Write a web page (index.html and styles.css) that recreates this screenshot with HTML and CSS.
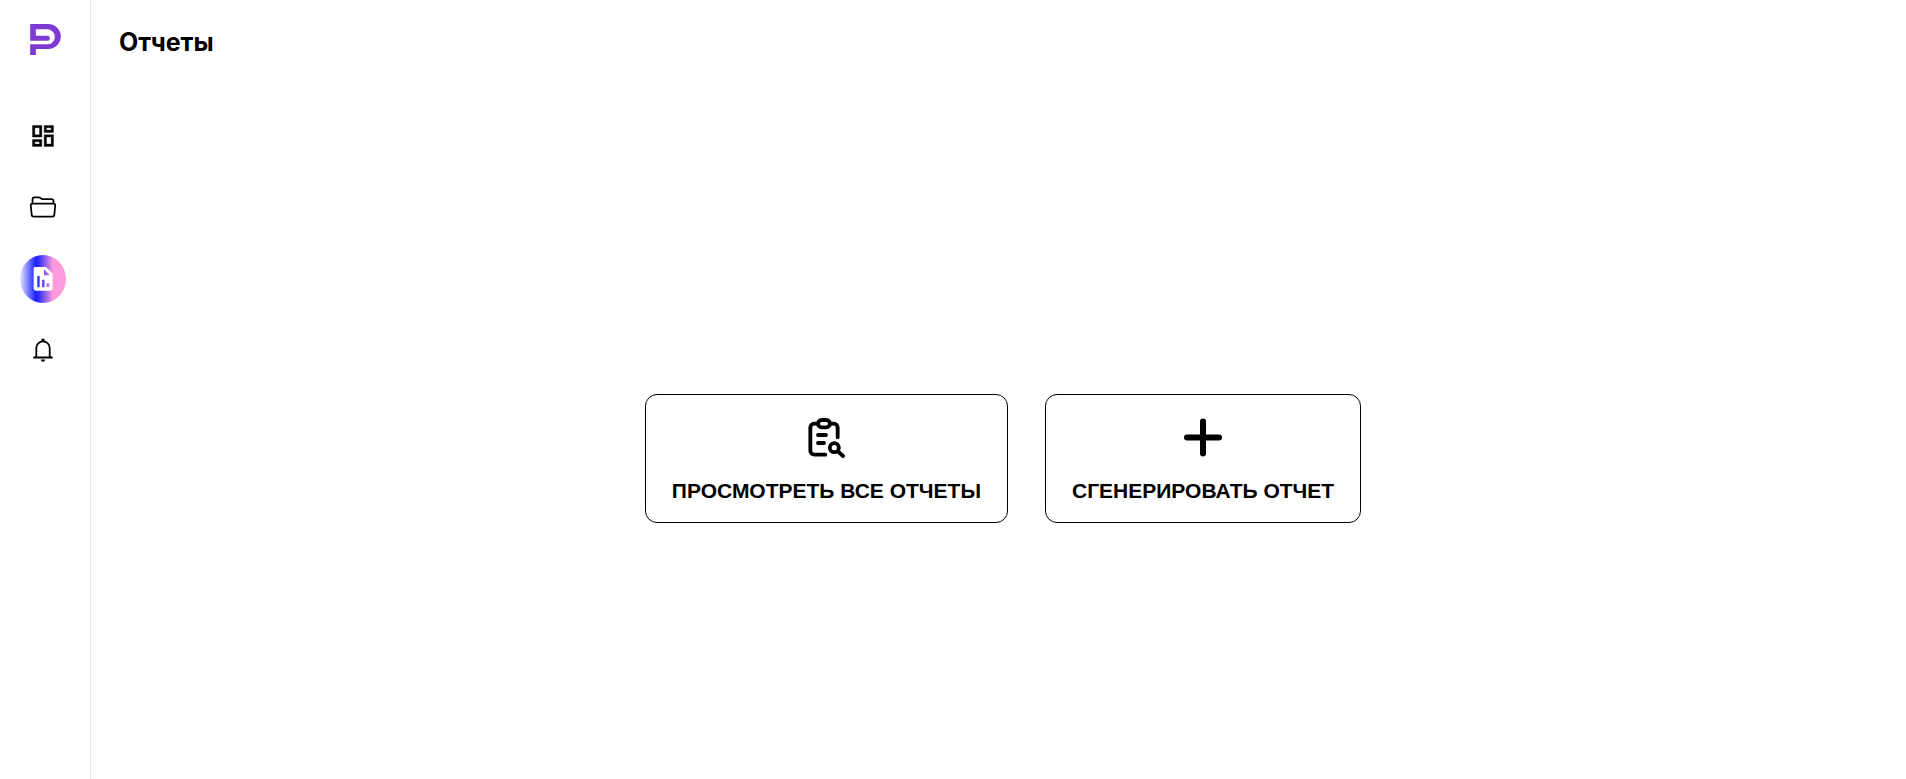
FILE: index.html
```html
<!DOCTYPE html>
<html lang="ru">
<head>
<meta charset="utf-8">
<title>Отчеты</title>
<meta name="viewport" content="width=device-width, initial-scale=1">
<link rel="stylesheet" href="styles.css">
</head>
<body>
<div class="app">
  <aside class="sidebar">
    <a class="logo" href="#" aria-label="Главная">
      <svg width="31" height="31" viewBox="91 72 92 93" fill="#7e3bd4" aria-hidden="true">
        <path d="M91 72H145.500A37.500 37.500 0 0 1 145.500 147H108V165H91V133H142.500A22.500 22.500 0 0 0 142.500 88H108V107H142.500A7.500 7.500 0 0 1 142.500 122H91Z"/>
      </svg>
    </a>
    <nav class="nav">
      <a class="nav-link" href="#" aria-label="Панель">
        <svg width="28" height="28" viewBox="0 -.8 24 24" stroke="#000" stroke-width=".3" aria-hidden="true">
          <path d="M19 5v2h-4V5h4M9 5v6H5V5h4m10 8v6h-4v-6h4M9 17v2H5v-2h4M21 3h-8v6h8V3zM11 3H3v10h8V3zm10 8h-8v10h8V11zm-10 4H3v6h8v-6z"/>
        </svg>
      </a>
      <a class="nav-link" href="#" aria-label="Файлы">
        <svg width="28" height="28" viewBox="0 0 512 512" fill="none" stroke="#000" stroke-width="32" stroke-linecap="round" stroke-linejoin="round" aria-hidden="true">
          <path d="M64 192v-72a40 40 0 0 1 40-40h75.890a40 40 0 0 1 22.190 6.720l27.840 18.560a40 40 0 0 0 22.190 6.720H408a40 40 0 0 1 40 40v40"/>
          <path d="M479.900 226.550L463.680 392a40 40 0 0 1-39.930 40H88.250a40 40 0 0 1-39.930-40L32.100 226.550A32 32 0 0 1 64 192h384.100a32 32 0 0 1 31.800 34.550z"/>
        </svg>
      </a>
      <a class="nav-link nav-link-active" href="#" aria-label="Отчеты" aria-current="page">
        <svg width="20" height="24" viewBox="-2 1 60 72" fill="#fff" fill-rule="evenodd" aria-hidden="true">
          <path d="M7 0H36L57 21V65a7 7 0 0 1-7 7H7a7 7 0 0 1-7-7V7a7 7 0 0 1 7-7ZM31 8V26H49ZM11 28V62H18V28ZM25 39V62H33V39ZM39 50V61H47V50Z"/>
        </svg>
      </a>
      <a class="nav-link" href="#" aria-label="Уведомления">
        <svg width="28" height="28" viewBox="0 0 28 28" fill="none" stroke="#000" stroke-width="1.800" aria-hidden="true">
          <path d="M4.300 20.500H23.700M7.300 20.500V11a6.700 6.700 0 0 1 13.400 0V20.500"/>
          <path d="M14 1.600a1.800 1.800 0 0 1 1.800 1.800V5H12.200V3.400A1.800 1.800 0 0 1 14 1.600ZM11.800 22.500H16.200a2.200 2.200 0 0 1-4.400 0Z" fill="#000" stroke="none"/>
        </svg>
      </a>
    </nav>
  </aside>
  <main class="main">
    <h1 class="title">Отчеты</h1>
    <div class="actions">
      <button class="card" type="button">
        <svg width="40" height="40" viewBox="35 40 120 120" fill="none" stroke="#000" stroke-width="11.500" stroke-linecap="round" stroke-linejoin="round" aria-hidden="true">
          <path d="M68 57H60A12 12 0 0 0 48 69V138A12 12 0 0 0 60 150H93M109 57H118A12 12 0 0 1 130 69V98M71 91H95M71 115H89M131 140L146 154"/>
          <rect x="71" y="46" width="36" height="22" rx="11"/>
          <circle cx="120" cy="129" r="13.500"/>
        </svg>
        <span>ПРОСМОТРЕТЬ ВСЕ ОТЧЕТЫ</span>
      </button>
      <button class="card" type="button">
        <svg width="40" height="40" viewBox="0 0 40 40" fill="none" stroke="#000" stroke-width="6" stroke-linecap="round" aria-hidden="true">
          <path d="M20 3.500V35.500M4 19.500H36"/>
        </svg>
        <span>СГЕНЕРИРОВАТЬ ОТЧЕТ</span>
      </button>
    </div>
  </main>
</div>
</body>
</html>
```
FILE: styles.css
```css
* {
  box-sizing: border-box;
}

body {
  margin: 0;
  background: #fff;
  color: #000;
  font-family: "Liberation Sans", Arial, sans-serif;
}

.app {
  display: flex;
  min-height: 100vh;
}

.sidebar {
  flex: none;
  padding: 24px 24px 24px 20px;
  border-right: 1px solid #e8e8ee;
}

.logo {
  display: block;
  padding-left: 10px;
}

.logo svg,
.nav-link svg {
  display: block;
}

.nav {
  display: flex;
  flex-direction: column;
  gap: 24px;
  margin-top: 56px;
}

.nav-link {
  display: flex;
  align-items: center;
  justify-content: center;
  width: 46px;
  height: 48px;
  border-radius: 50%;
}

.nav-link-active {
  background: linear-gradient(90deg, #e4e4ff 0%, #1c22ff 34%, #2c2cfb 40%, #ff9bdc 72%);
}

.main {
  flex: 1;
  display: flex;
  flex-direction: column;
  padding: 24px 19px 24px 28px;
}

.title {
  margin: 0;
  font-family: Inter, sans-serif;
  font-size: 25px;
  font-weight: 700;
  line-height: 36px;
}

.actions {
  flex: 1;
  display: flex;
  flex-wrap: wrap;
  align-items: center;
  justify-content: center;
  gap: 37px;
  padding-top: 118px;
  padding-bottom: 16px;
}

.card {
  display: flex;
  flex-direction: column;
  align-items: center;
  gap: 21px;
  padding: 23px 26px 19px;
  border: 1px solid #000;
  border-radius: 12px;
  background: #fff;
  color: #000;
  font-family: inherit;
  font-size: 21px;
  font-weight: 700;
  line-height: 24px;
  cursor: pointer;
}
```
